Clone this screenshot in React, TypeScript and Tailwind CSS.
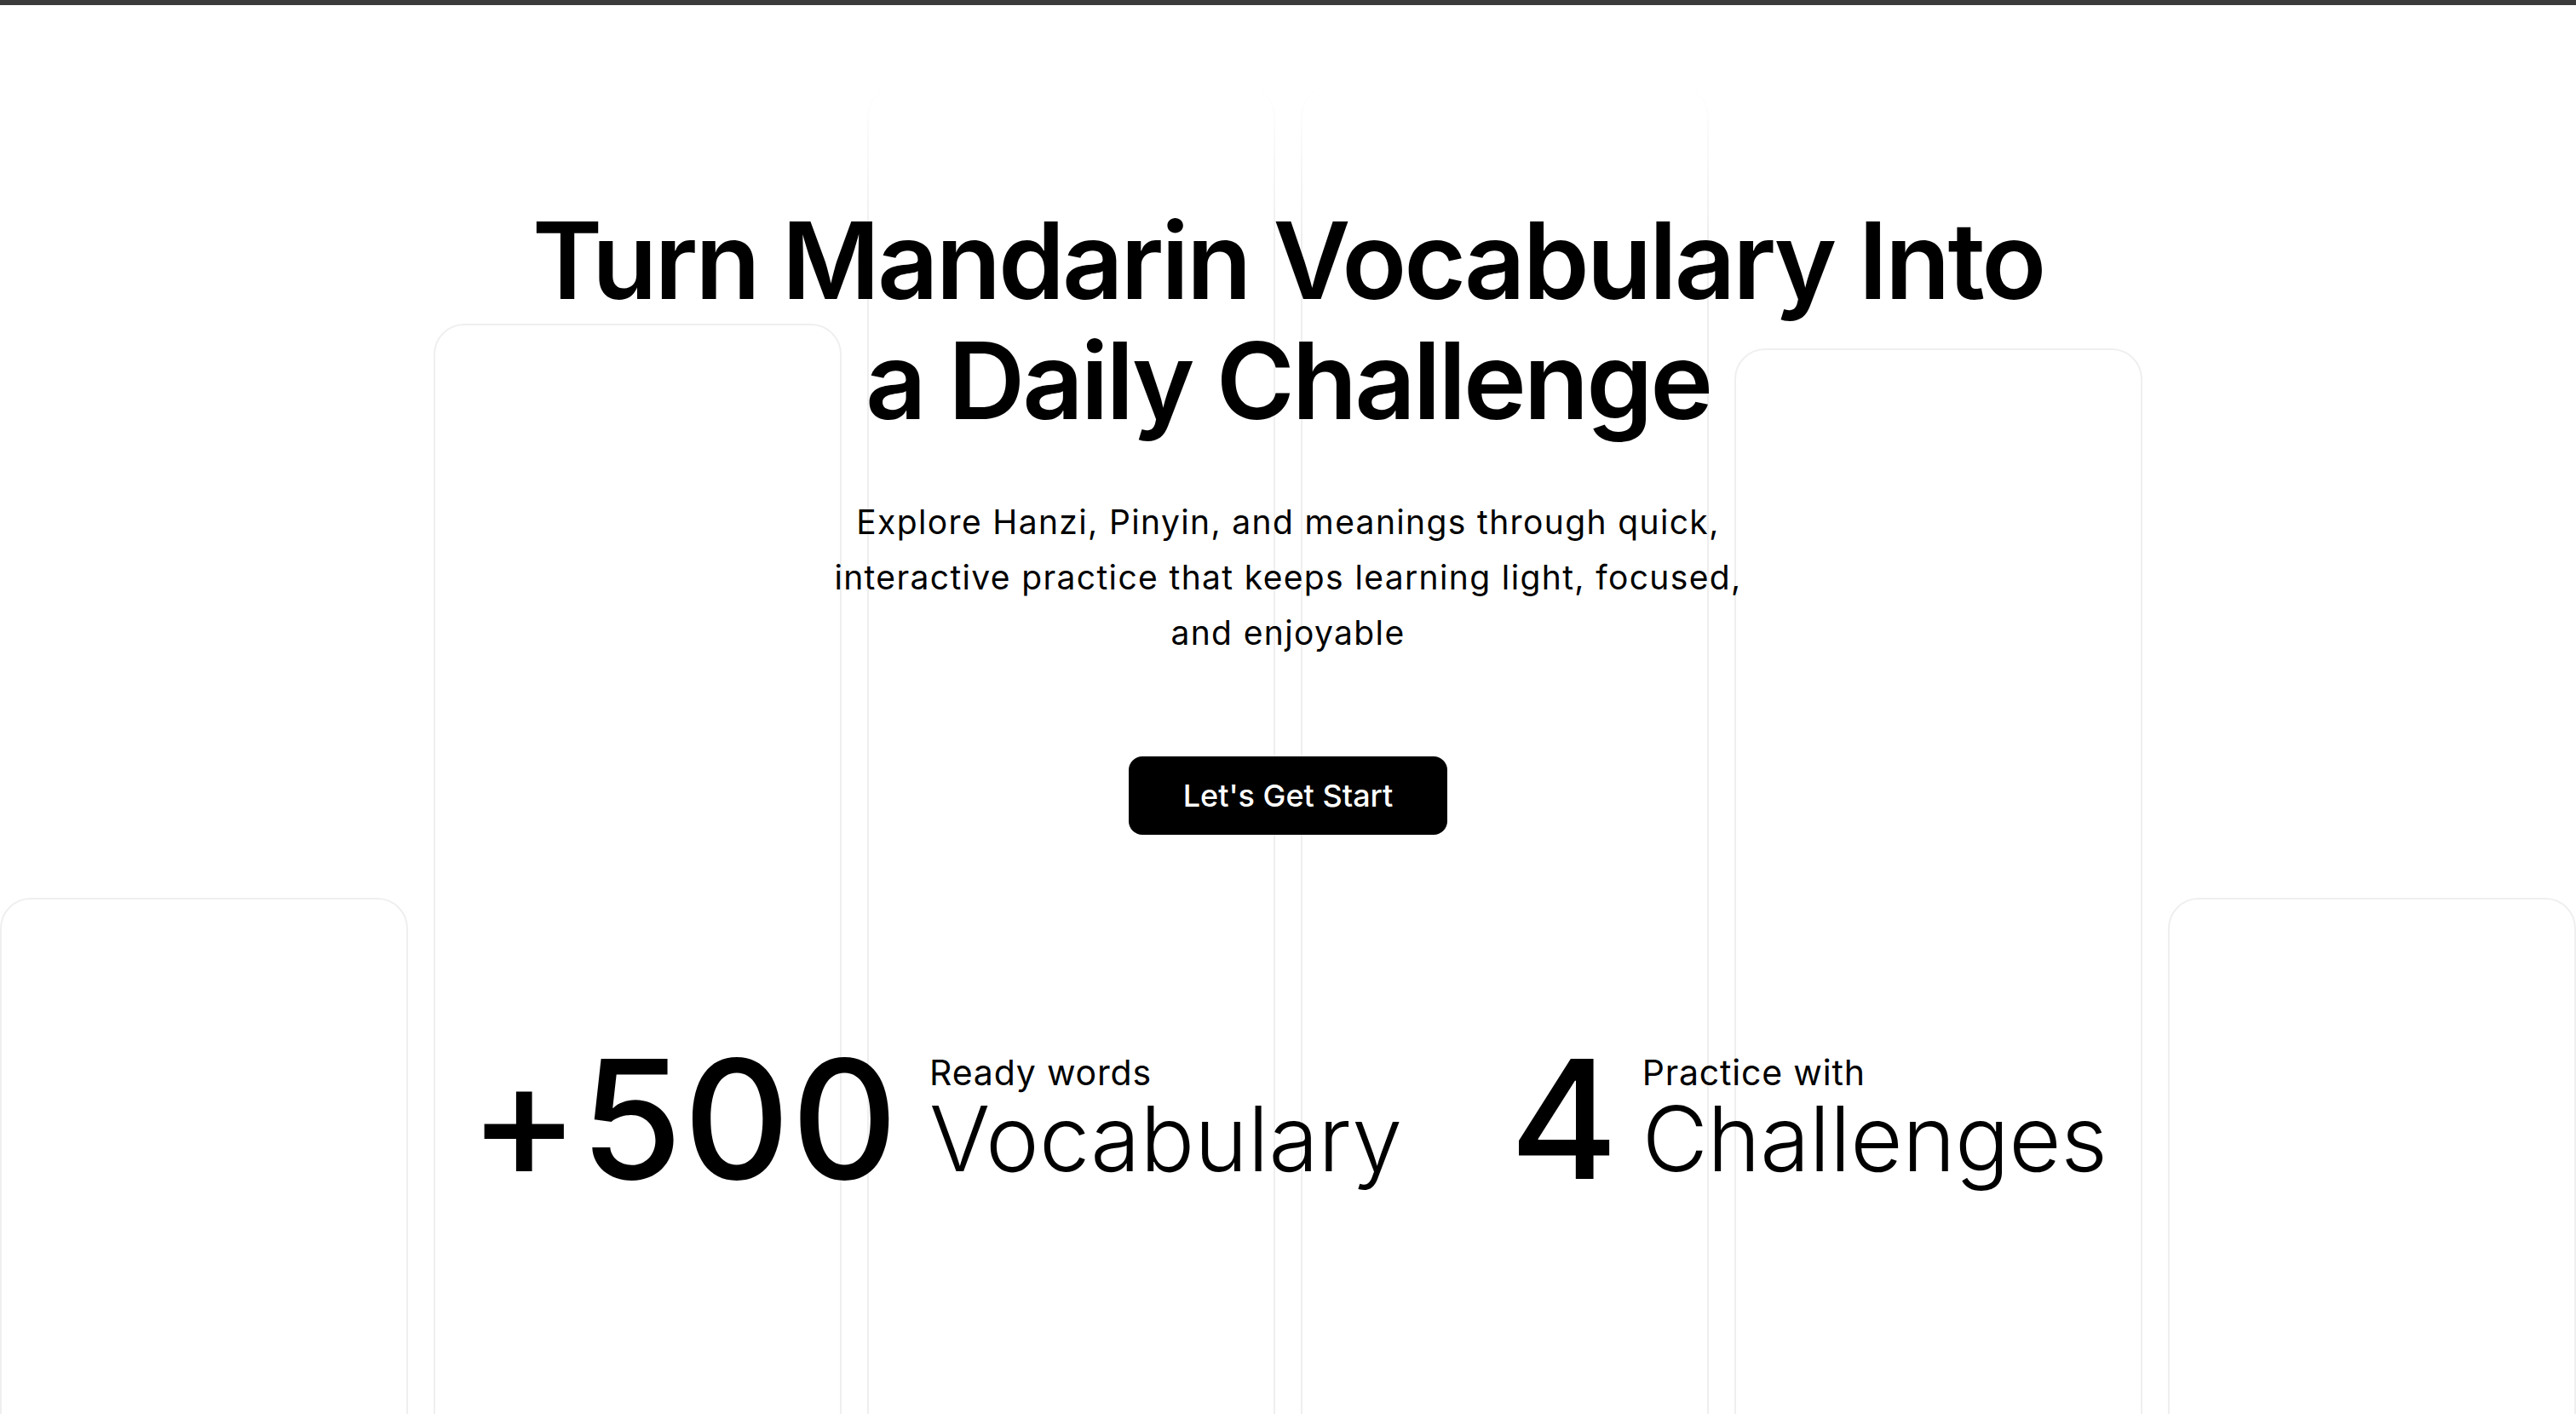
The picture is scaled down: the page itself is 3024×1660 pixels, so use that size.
import React from "react";

const cards = [
  { pt: "pt-[1054px]", fade: false },
  { pt: "pt-[380px]", fade: false },
  { pt: "pt-[100px]", fade: true },
  { pt: "pt-[100px]", fade: true },
  { pt: "pt-[409px]", fade: false },
  { pt: "pt-[1054px]", fade: false },
];

export default function App() {
  return (
    <div className="relative w-full h-[1660px] overflow-hidden bg-white font-['Inter',sans-serif] text-black">
      {/* background cards */}
      <div className="absolute inset-0 flex gap-[30px]">
        {cards.map((c, i) => (
          <div key={i} className={`flex-1 ${c.pt}`}>
            <div
              className={
                c.fade
                  ? "h-[2400px] rounded-[36px] border-2 border-[#efefef] bg-white [mask-image:linear-gradient(to_bottom,transparent,black_180px)]"
                  : "h-[2400px] rounded-[36px] border-2 border-[#efefef] bg-white"
              }
            />
          </div>
        ))}
      </div>

      <div className="relative h-[6px] bg-[#3b3b3b]" />

      <main className="relative flex flex-col items-center">
        <h1 className="mt-[229px] text-center text-[125px] leading-[141px] font-semibold tracking-[-0.025em]">
          Turn Mandarin Vocabulary Into
          <br />
          a Daily Challenge
        </h1>

        <p className="mt-[63px] w-[1200px] text-center text-[39px] leading-[65px] font-normal tracking-[0.035em]">
          Explore Hanzi, Pinyin, and meanings through quick,
          <br />
          interactive practice that keeps learning light, focused,
          <br />
          and enjoyable
        </p>

        <button className="mt-[113px] h-[92px] w-[374px] rounded-[16px] bg-black text-white text-[36px] font-medium">
          Let's Get Start
        </button>

        <div className="mt-[237px] flex items-start gap-[126px]">
          <div className="flex items-start gap-[36px]">
            <span className="text-[194px] leading-[194px] font-medium tracking-[0.006em]">+500</span>
            <div className="flex flex-col pt-[22px]">
              <span className="text-[41px] leading-[40px] font-normal tracking-[0.02em]">Ready words</span>
              <span className="mt-[3px] text-[106px] leading-[110px] font-light">Vocabulary</span>
            </div>
          </div>
          <div className="flex items-start gap-[28px]">
            <span className="text-[194px] leading-[194px] font-medium">4</span>
            <div className="flex flex-col pt-[22px]">
              <span className="text-[41px] leading-[40px] font-normal tracking-[0.02em]">Practice with</span>
              <span className="mt-[3px] text-[106px] leading-[110px] font-light tracking-[-0.005em]">Challenges</span>
            </div>
          </div>
        </div>
      </main>
    </div>
  );
}
